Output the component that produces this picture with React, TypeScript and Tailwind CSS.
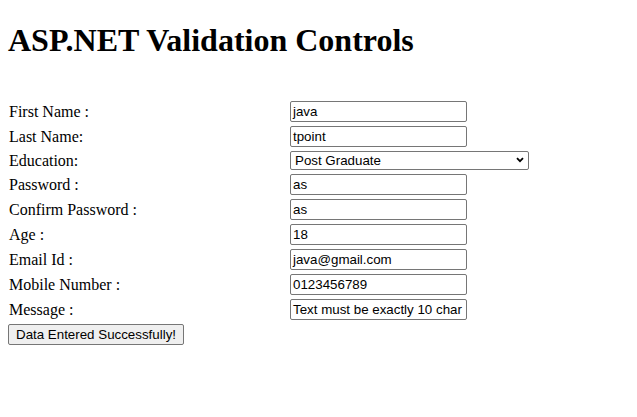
import React from "react";

const rows: { label: string; value: string; kind?: "select" }[] = [
  { label: "First Name :", value: "java" },
  { label: "Last Name:", value: "tpoint" },
  { label: "Education:", value: "Post Graduate", kind: "select" },
  { label: "Password :", value: "as" },
  { label: "Confirm Password :", value: "as" },
  { label: "Age :", value: "18" },
  { label: "Email Id :", value: "java@gmail.com" },
  { label: "Mobile Number :", value: "0123456789" },
  { label: "Message :", value: "Text must be exactly 10 char" },
];

export default function App() {
  return (
    <div className="w-[637px] h-[417px] bg-white text-black px-2 overflow-hidden" style={{ fontFamily: '"Liberation Serif", "Times New Roman", serif' }}>
      <h1 className="text-[32px] font-bold leading-[37px] pt-[22px] m-0">ASP.NET Validation Controls</h1>
      <div className="mt-[40px] grid grid-cols-[282px_auto] justify-start">
        {rows.map((r) => (
          <React.Fragment key={r.label}>
            <div className={`flex items-center pl-px text-[16px] ${r.kind === "select" ? "h-[23px]" : "h-[25px]"}`}>{r.label}</div>
            <div className={`flex items-center ${r.kind === "select" ? "h-[23px]" : "h-[25px]"}`}>
              {r.kind === "select" ? (
                <div className="relative w-[239px] h-[19px] border border-[#767676] rounded-[2px] bg-white flex items-center pl-[4px] text-[13.33px]" style={{ fontFamily: '"Liberation Sans", Arial, sans-serif' }}>
                  <span>{r.value}</span>
                  <svg className="absolute right-[4px] top-[5px]" width="8" height="6" viewBox="0 0 8 6">
                    <path d="M1 1.2 L4 4.2 L7 1.2" fill="none" stroke="#000" strokeWidth="1.8" />
                  </svg>
                </div>
              ) : (
                <div className="w-[177px] h-[21px] border border-[#767676] rounded-[2px] bg-white flex items-center pl-[2px] text-[13.33px] whitespace-nowrap" style={{ fontFamily: '"Liberation Sans", Arial, sans-serif' }}>
                  {r.value}
                </div>
              )}
            </div>
          </React.Fragment>
        ))}
      </div>
      <div className="mt-[2px] flex">
        <button className="h-[21px] px-[7px] border border-[#767676] rounded-[2px] bg-[#efefef] text-[13.33px] leading-none" style={{ fontFamily: '"Liberation Sans", Arial, sans-serif' }}>
          Data Entered Successfully!
        </button>
      </div>
    </div>
  );
}
